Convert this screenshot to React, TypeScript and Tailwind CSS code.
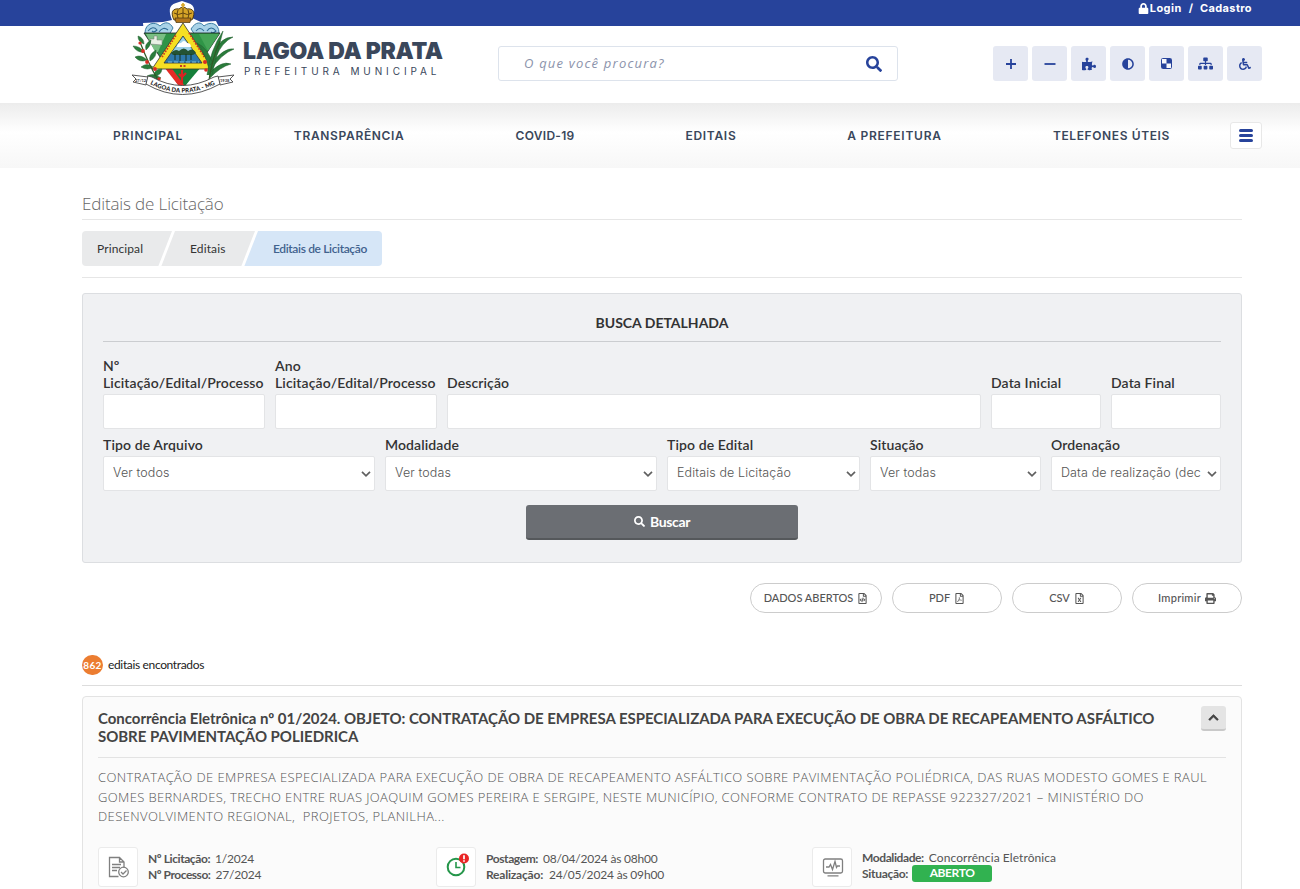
import type { ReactNode } from 'react';
import {
  FaAdjust, FaChevronUp, FaLock, FaPrint, FaPuzzlePiece, FaRegFileCode, FaRegFileExcel,
  FaRegFilePdf, FaSearch, FaSitemap, FaWheelchair,
} from 'react-icons/fa';

const sans = "font-['Inter',sans-serif]";
const light = "font-['Open_Sans',sans-serif] font-light";

function Crest() {
  return (
    <svg viewBox="0 0 106 97" className="h-[97px] w-[106px]">
      <path
        d="M42 20 C39 12 38 5 46 3 L52 1 L58 3 C66 5 65 13 62 18 L71 22 L86 21 L92 33 L105 45 L101 62 L94 76 L103 76 L99 88 L69 94 L52 97 L35 94 L5 88 L1 76 L11 76 L2 48 L7 36 L14 34 L13 23 L33 22 Z"
        fill="#fff"
      />
      <path d="M15 33 C15 23 25 21 30 26 C35 21 40 22 43 28 L39 35 L27 36 Z" fill="#a9d3e8" stroke="#3d7fa6" />
      <path d="M61 29 C66 21 71 22 74 26 C80 21 89 23 89 33 L76 36 L65 35 Z" fill="#a9d3e8" stroke="#3d7fa6" />
      <path d="M18 31 q5 -6 9 -1 q-3 3 -5 1 M29 32 q4 -6 9 -2 M66 31 q4 -5 8 0 M77 31 q4 -6 9 0 q-3 3 -5 1" fill="none" stroke="#2f6d97" strokeWidth="1.100" />
      <path d="M14 33 H90 L52 90 Z" fill="#2f9447" stroke="#222" strokeWidth=".8" />
      <path d="M16 34 H36 L28 52 H25 Z" fill="#79bf83" />
      <path d="M20 44 v-5 h4 v-3 h3 v4 h5 v5 Z" fill="#e8f0e4" stroke="#777" strokeWidth=".5" />
      <path d="M69 34 H89 L78 51 Z" fill="#45a557" />
      <path d="M34 67 H41 L55 86 L52 90 Z" fill="#e42c26" />
      <path d="M41 67 H71 L55 86 Z" fill="#16803a" />
      <path d="M52 70 v13 M49 74 l3 3 l4 -4" stroke="#d92323" strokeWidth="2.200" fill="none" />
      <path d="M53 23 L83 69 H22 Z" fill="#f5df23" stroke="#333" strokeWidth=".8" />
      <path d="M53 36 L72 63 H34 Z" fill="#2d78aa" stroke="#333" strokeWidth=".8" />
      <path d="M53 37 L64 52 H42 Z" fill="#9dd1e9" />
      <path d="M47 47 q0 -4 4 -4 q3 -4 6 0 q4 0 4 4 Z" fill="#fff" />
      <path d="M41 53 q4 -5 8 -2 q5 -5 9 0 q5 -4 8 2 l-3 2 H43 Z" fill="#245334" />
      <path d="M45 54 v6 M50 54 v7 M56 54 v7 M61 54 v6" stroke="#16301f" strokeWidth="1" />
      <path d="M38 62 H69" stroke="#8bc5df" strokeWidth=".9" strokeDasharray="4 2" />
      <path d="M32 57 L46 35" stroke="#c83a21" strokeWidth="1.800" strokeDasharray="1.6 1.4" />
      <path d="M59 33 L75 58" stroke="#c83a21" strokeWidth="1.800" strokeDasharray="1.6 1.4" />
      <path d="M50 66 h6" stroke="#c83a21" strokeWidth="2" strokeDasharray="2 1.5" />
      <g fill="#2a7c3b" stroke="#205c2c" strokeWidth=".5">
        <path d="M8 36 q6 2 6 8 q-6 -2 -6 -8 M3 46 q7 0 11 6 q-7 1 -11 -6 M5 57 q6 -3 12 3 q-7 3 -12 -3 M11 67 q6 -5 12 0 q-5 4 -12 0 M21 40 q0 6 -5 10 q-2 -6 5 -10 M26 50 q1 7 -6 11 q-2 -6 6 -11 M32 69 q-1 7 -8 7 q0 -7 8 -7 M17 76 q7 -4 14 2 q-8 3 -14 -2" />
        <path d="M77 75 Q80 50 93 31 Q88 50 82 75 M79 69 Q74 50 67 43 Q78 48 83 64 M80 65 Q94 47 104 49 Q91 54 81 70 M79 74 Q91 60 101 64 Q90 67 80 78 M85 53 Q90 37 103 37 Q92 42 86 57" />
      </g>
      <path d="M10 42 Q17 61 28 80 M79 80 Q82 59 90 41" fill="none" stroke="#315a27" strokeWidth="1.200" />
      <g fill="#d82c24">
        <circle cx="13" cy="51" r="1.900" /><circle cx="17" cy="62" r="1.900" /><circle cx="25" cy="69" r="1.900" />
        <circle cx="10" cy="43" r="1.600" /><circle cx="29" cy="79" r="1.700" /><circle cx="75" cy="62" r="2" /><circle cx="76" cy="70" r="1.800" />
      </g>
      <path d="M44 20 C40 12 43 8 49 9 Q53 5 57 9 C63 8 66 12 62 20 Z" fill="#d7a527" stroke="#46310c" strokeWidth=".9" />
      <path d="M48 10 q-2 4 0 8 M53 8 v10 M58 10 q2 4 0 8 M44 13 q4 3 9 0 q4 3 9 0" stroke="#604310" strokeWidth="1" fill="none" />
      <path d="M45 18 h16 l-1 4.500 h-14 Z" fill="#b2761c" stroke="#46310c" strokeWidth=".7" />
      <path d="M53 3 v5 M51 5 h4" stroke="#d7a527" strokeWidth="1.700" />
      <path
        d="M2 75 L18 77 L16 85 L3 82 L6 79 Z M104 75 L88 77 L90 85 L103 82 L100 79 Z"
        fill="#fff" stroke="#444" strokeWidth=".9"
      />
      <path d="M18 76 L22 77 Q52 94 84 77 L88 76 L90 84 Q52 105 16 84 Z" fill="#fff" stroke="#444" strokeWidth=".9" />
      <path id="ribbon" d="M20 84 Q52 101 86 84" fill="none" />
      <text className="font-['Lato',sans-serif]" fontSize="6" fontWeight="900" fill="#222" textLength="68">
        <textPath href="#ribbon">LAGOA DA PRATA - MG</textPath>
      </text>
      <text x="5" y="81.500" className="font-['Lato',sans-serif]" fontSize="4" fontWeight="700" fill="#333">27/12</text>
      <text x="90" y="81.500" className="font-['Lato',sans-serif]" fontSize="4" fontWeight="700" fill="#333">1938</text>
    </svg>
  );
}

const tools: ReactNode[] = [
  <svg key="plus" viewBox="0 0 12 12" className="size-3"><path d="M6 1v10M1 6h10" stroke="currentColor" strokeWidth="1.8" /></svg>,
  <svg key="minus" viewBox="0 0 12 12" className="size-3"><path d="M.5 6h11" stroke="currentColor" strokeWidth="1.8" /></svg>,
  <FaPuzzlePiece key="puzzle" className="size-[14px]" />,
  <FaAdjust key="contrast" className="size-3" />,
  <svg key="board" viewBox="0 0 11 11" className="size-[11px]">
    <rect x=".5" y=".5" width="10" height="10" rx="1" fill="#f7f8fc" stroke="currentColor" />
    <path d="M5.500 1H10v4.500H5.500zM1 5.500h4.500V10H1z" fill="currentColor" />
  </svg>,
  <FaSitemap key="map" className="size-[15px]" />,
  <FaWheelchair key="wheel" className="size-3" />,
];

const menu = [
  { label: 'PRINCIPAL', cls: 'w-[70px] tracking-[0.84px]' },
  { label: 'TRANSPARÊNCIA', cls: 'w-[111px] tracking-[0.67px]' },
  { label: 'COVID-19', cls: 'w-[59px] tracking-[0.29px]' },
  { label: 'EDITAIS', cls: 'w-[51px] tracking-[0.72px]' },
  { label: 'A PREFEITURA', cls: 'w-[95px] tracking-[0.75px]' },
  { label: 'TELEFONES ÚTEIS', cls: 'w-[117px] tracking-[0.6px]' },
];

function Field({ label, width, value }: { label: ReactNode; width: string; value?: string }) {
  return (
    <div className={`flex shrink-0 flex-col justify-end ${width}`}>
      <label className="mb-[3px] text-sm leading-[17px] font-semibold tracking-[0.11px] text-[#333]">{label}</label>
      <div className="flex h-[35px] items-center rounded-[2px] border border-[#e3e4e6] bg-white pr-[3px] pl-[9px]">
        {value && (
          <>
            <span className={`${sans} min-w-0 flex-1 overflow-hidden text-[12.5px] font-light tracking-[0.12px] whitespace-nowrap text-[#555]`}>
              {value}
            </span>
            <svg viewBox="0 0 10 6" className="ml-1 h-1.5 w-2.5 shrink-0">
              <path d="M1 .8 5 4.800 9 .8" fill="none" stroke="#606060" strokeWidth="1.7" />
            </svg>
          </>
        )}
      </div>
    </div>
  );
}

function Pill({ label, icon, cls }: { label: string; icon: ReactNode; cls: string }) {
  return (
    <button className={`flex h-[30px] items-center justify-center gap-[4px] rounded-full border border-[#ccc] text-[#555] ${cls}`}>
      <span>{label}</span>
      {icon}
    </button>
  );
}

function IconBox({ children }: { children: ReactNode }) {
  return (
    <div className="flex size-10 shrink-0 items-center justify-center rounded-[3px] border border-[#ebebeb] bg-white pl-[2px]">
      {children}
    </div>
  );
}

export default function App() {
  return (
    <div className="h-[889px] w-[1300px] overflow-hidden bg-white font-['Lato',sans-serif] text-[#333]">
      <div className="relative">
        <div className={`${sans} flex h-[26px] justify-end bg-[#27439b] pr-12 text-[11px] font-bold text-white`}>
          <div className="flex h-4 items-center whitespace-pre">
            <FaLock className="mr-[1px] size-[11px]" />
            <span className="tracking-[0.45px]">Login</span>
            <span className="px-[7px]">/</span>
            <span className="tracking-[0.375px]">Cadastro</span>
          </div>
        </div>
        <header className="flex h-[77px] items-start pt-5">
          <div className="ml-[243px] w-[255px]">
            <div className={`${sans} -mt-[11px] text-[23px] leading-8 font-black tracking-[-0.3px] whitespace-nowrap text-[#3a475b]`}>
              LAGOA DA PRATA
            </div>
            <div className={`${sans} -mt-[3px] ml-px text-[10px] leading-[14px] tracking-[3.9px] whitespace-nowrap text-[#3a475b]`}>
              PREFEITURA MUNICIPAL
            </div>
          </div>
          <div className="flex h-[35px] w-[400px] items-center justify-between rounded-[3px] border border-[#dde3ec] pr-[15px] pl-[25px]">
            <span className="font-['Open_Sans',sans-serif] text-[13px] tracking-[1.2px] text-[#8b93ab] italic">O que você procura?</span>
            <FaSearch className="size-4 text-[#27439b]" />
          </div>
          <div className="ml-[95px] flex gap-1">
            {tools.map((t, i) => (
              <div key={i} className="flex size-[35px] items-center justify-center rounded-[3px] bg-[#e6e9f3] text-[#27439b]">
                {t}
              </div>
            ))}
          </div>
        </header>
        <div className="absolute top-0 left-[130px]"><Crest /></div>
      </div>

      <nav className="flex h-[65px] items-center bg-linear-to-b from-[#ececec] via-white via-45% to-[#f7f7f7] pr-[38px] pl-[113px]">
        <div className={`${sans} flex w-[1057px] justify-between text-xs font-semibold text-[#3a475b]`}>
          {menu.map((m) => (
            <span key={m.label} className={`whitespace-nowrap ${m.cls}`}>{m.label}</span>
          ))}
        </div>
        <button className="ml-auto flex h-[27px] w-8 flex-col items-center justify-center gap-[2px] rounded-[3px] border border-[#e8e8e8] bg-white">
          <span className="h-[3px] w-3.5 rounded-sm bg-[#27439b]" />
          <span className="h-[3px] w-3.5 rounded-sm bg-[#27439b]" />
          <span className="h-[3px] w-3.5 rounded-sm bg-[#27439b]" />
        </button>
      </nav>

      <main className="mr-[58px] ml-[82px]">
        <h1 className={`${light} h-[52px] border-b border-[#e6e6e6] pt-[23px] text-[17px] leading-[26px] tracking-[-0.14px] text-[#666]`}>
          Editais de Licitação
        </h1>
        <div className="h-[58px] border-b border-[#e6e6e6] pt-[11px]">
          <div className="grid h-[35px] w-[300px] grid-cols-[92px_84px_140px] overflow-hidden rounded-[4px] text-xs leading-[36px]">
            <span className="bg-[#e9eaeb] pl-[15px] tracking-[0.1px] [clip-path:polygon(0_0,90px_0,76px_100%,0_100%)]">Principal</span>
            <span className="-ml-[14px] bg-[#e9eaeb] pl-[30px] tracking-[0.12px] [clip-path:polygon(15px_0,95px_0,81px_100%,1px_100%)]">Editais</span>
            <span className="-ml-[15px] bg-[#d6e6f7] pl-[30px] font-semibold tracking-[-0.36px] text-[#41628e] [clip-path:polygon(15px_0,100%_0,100%_100%,1px_100%)]">
              Editais de Licitação
            </span>
          </div>
        </div>

        <section className="mt-[15px] h-[270px] rounded-[3px] border border-[#dcdee1] bg-[#f0f1f3] px-5">
          <h2 className="h-12 border-b border-[#cbcdd0] pt-5 text-center text-sm leading-[18px] font-bold">BUSCA DETALHADA</h2>
          <div className="mt-[15px] flex gap-[10px]">
            <Field label={<>Nº<br />Licitação/Edital/Processo</>} width="w-[162px]" />
            <Field label={<>Ano<br />Licitação/Edital/Processo</>} width="w-[162px]" />
            <Field label="Descrição" width="w-[534px]" />
            <Field label="Data Inicial" width="w-[110px]" />
            <Field label="Data Final" width="w-[110px]" />
          </div>
          <div className="mt-[7px] flex gap-[10px]">
            <Field label="Tipo de Arquivo" width="w-[272px]" value="Ver todos" />
            <Field label="Modalidade" width="w-[272px]" value="Ver todas" />
            <Field label="Tipo de Edital" width="w-[193px]" value="Editais de Licitação" />
            <Field label="Situação" width="w-[171px]" value="Ver todas" />
            <Field label="Ordenação" width="w-[170px]" value="Data de realização (dec" />
          </div>
          <button className="mx-auto mt-[14px] flex h-[35px] w-[272px] items-center justify-center gap-[5px] rounded-[3px] border-b-2 border-[#55585b] bg-[#6b6e73] text-sm font-bold tracking-[-0.37px] text-white">
            <FaSearch className="size-[11px]" />
            Buscar
          </button>
        </section>

        <div className="mt-5 flex justify-end gap-[10px] text-[11px] font-medium">
          <Pill label="DADOS ABERTOS" cls="w-[132px] tracking-[-0.02px]" icon={<FaRegFileCode className="size-[11px]" />} />
          <Pill label="PDF" cls="w-[110px]" icon={<FaRegFilePdf className="size-[11px]" />} />
          <Pill label="CSV" cls="w-[110px]" icon={<FaRegFileExcel className="size-[11px]" />} />
          <Pill label="Imprimir" cls="w-[110px] tracking-[0.25px]" icon={<FaPrint className="size-[11px]" />} />
        </div>

        <div className="mt-[42px] flex h-[31px] items-start border-b border-[#ddd]">
          <span className="flex h-5 w-[21px] items-center justify-center rounded-full bg-[#ec7d31] text-[10px] font-bold tracking-[0.3px] text-white">862</span>
          <span className="ml-[5px] text-xs leading-5 tracking-[-0.35px] text-[#222]">editais encontrados</span>
        </div>

        <article className="mt-[10px] h-[230px] rounded-[4px] border border-[#e3e3e3] bg-[#fbfbfb] px-[15px]">
          <div className="flex h-[61px] items-start justify-between border-b border-[#e3e3e3] pt-[9px]">
            <h3 className="pt-[3px] text-[15px] leading-[18px] font-bold tracking-[-0.035px] whitespace-nowrap text-[#444]">
              Concorrência Eletrônica nº 01/2024. OBJETO: CONTRATAÇÃO DE EMPRESA ESPECIALIZADA PARA EXECUÇÃO DE OBRA DE RECAPEAMENTO ASFÁLTICO
              <br />
              SOBRE PAVIMENTAÇÃO POLIEDRICA
            </h3>
            <button className="flex size-[25px] items-center justify-center rounded-[3px] border-b-2 border-[#c9c9c9] bg-[#e4e4e4] text-[#444]">
              <FaChevronUp className="size-[11px]" stroke="currentColor" strokeWidth="30" />
            </button>
          </div>
          <p className={`${light} mt-[10px] text-[13px] leading-[19.5px] tracking-[0.41px] whitespace-pre text-[#555]`}>
            CONTRATAÇÃO DE EMPRESA ESPECIALIZADA PARA EXECUÇÃO DE OBRA DE RECAPEAMENTO ASFÁLTICO SOBRE PAVIMENTAÇÃO POLIÉDRICA, DAS RUAS MODESTO GOMES E RAUL
            <br />
            <span className="tracking-[0.37px]">
              GOMES BERNARDES, TRECHO ENTRE RUAS JOAQUIM GOMES PEREIRA E SERGIPE, NESTE MUNICÍPIO, CONFORME CONTRATO DE REPASSE 922327/2021 – MINISTÉRIO DO
            </span>
            <br />
            {'DESENVOLVIMENTO REGIONAL,  PROJETOS, PLANILHA...'}
          </p>
          <div className="mt-5 grid grid-cols-[338px_376px_1fr] text-xs leading-4 text-[#555]">
            <div className="flex gap-[10px]">
              <IconBox>
                <svg viewBox="0 0 22 22" className="size-[22px]" fill="none" stroke="#808080" strokeWidth="1.3">
                  <path d="M10.500 20.500H1.500V1.500h10l4.500 4.500v6M11.500 1.500V6H16M4 8.500h9M4 11.500h8M4 14.500h5" />
                  <circle cx="15.500" cy="16" r="4.800" />
                  <path d="m13 16 2 2 3.500-3.500" />
                </svg>
              </IconBox>
              <div className="pt-1">
                <div><b className="tracking-[-0.42px]">Nº Licitação:</b><span className="ml-[5px] tracking-[-0.2px]">1/2024</span></div>
                <div><b className="tracking-[-0.47px]">Nº Processo:</b><span className="ml-[5px] tracking-[-0.2px]">27/2024</span></div>
              </div>
            </div>
            <div className="flex gap-[10px]">
              <IconBox>
                <svg viewBox="0 0 24 24" className="mb-1 size-6" fill="none">
                  <circle cx="11" cy="14" r="8.300" stroke="#25964a" strokeWidth="2" />
                  <path d="M11 9v5.500h4.500" stroke="#25964a" strokeWidth="1.600" />
                  <circle cx="19" cy="5.500" r="5" fill="#ea2525" />
                  <path d="M19 2.200v4M19 7.200v1.600" stroke="#fff" strokeWidth="1.700" />
                </svg>
              </IconBox>
              <div className="pt-1">
                <div><b className="tracking-[-0.4px]">Postagem:</b><span className="ml-[5px] tracking-[-0.2px]">08/04/2024 às 08h00</span></div>
                <div><b className="tracking-[-0.21px]">Realização:</b><span className="ml-[6px] tracking-[-0.18px]">24/05/2024 às 09h00</span></div>
              </div>
            </div>
            <div className="flex gap-[10px]">
              <IconBox>
                <svg viewBox="0 0 22 20" className="h-5 w-[22px]" fill="none" stroke="#808080" strokeWidth="1.300">
                  <rect x="1.500" y="2" width="19" height="14" rx="1.800" />
                  <path d="M4 10h3l1.500-2.500 2 5 2.500-8 1.500 6 1-1.500h2.500M5.500 18.800h11" />
                </svg>
              </IconBox>
              <div className="pt-[3px]">
                <div><b className="tracking-[-0.4px]">Modalidade:</b><span className="ml-[5px] tracking-[0.08px]">Concorrência Eletrônica</span></div>
                <div className="flex">
                  <b className="tracking-[-0.3px]">Situação:</b>
                  <span className="-mt-px ml-1 flex h-[17px] w-20 items-center justify-center rounded-[3px] bg-[#31b250] font-bold tracking-[-0.4px] text-white">ABERTO</span>
                </div>
              </div>
            </div>
          </div>
        </article>
      </main>
    </div>
  );
}
